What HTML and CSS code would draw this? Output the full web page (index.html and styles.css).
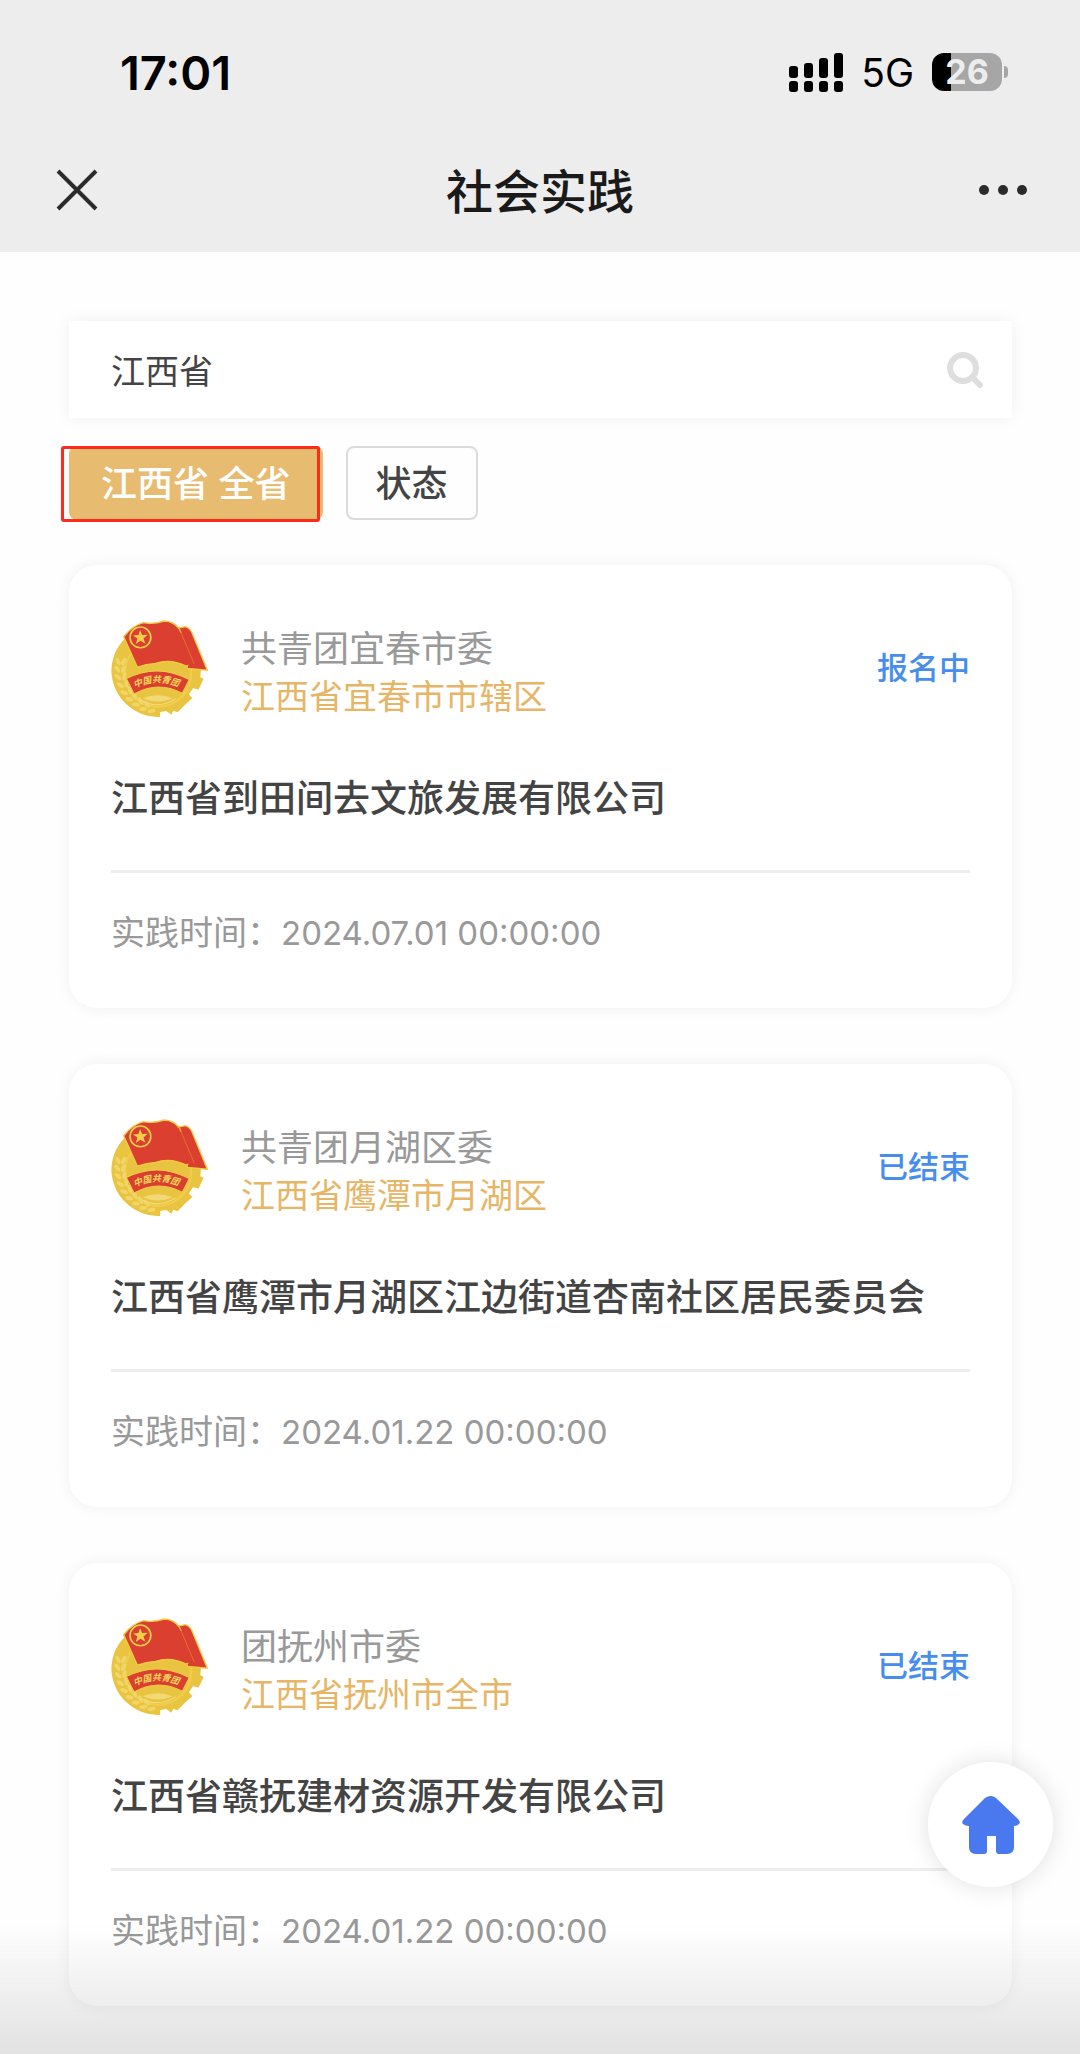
FILE: index.html
```html
<!DOCTYPE html>
<html lang="zh-CN">
<head>
<meta charset="utf-8">
<meta name="viewport" content="width=device-width, initial-scale=1">
<title>社会实践</title>
<link rel="stylesheet" href="styles.css">
</head>
<body>
<svg class="sprite" aria-hidden="true">
  <defs>
    <path id="banner-arc" d="M134 266 Q202 232 282 268"/>
    <symbol id="emblem" viewBox="63 62 290 290">
      <path fill="#e9c440" d="M64 214 A142 142 0 0 1 118 106 L300 110 L332 208 L330 233 L340 238 L325 270 L308 266 L296 284 L306 296 L288 312 L262 338 L249 333 L244 345 L228 334 L210 337 L210 352 A142 142 0 0 1 64 214Z"/>
      <circle cx="203" cy="222" r="103" fill="#f0ce4c"/>
      <circle cx="203" cy="222" r="96" fill="#e9c440"/>
      <g fill="#f1d568">
        <ellipse cx="84" cy="186" rx="6" ry="12" transform="rotate(-25 84 186)"/><ellipse cx="101" cy="186" rx="6" ry="12" transform="rotate(28 101 186)"/>
        <ellipse cx="82" cy="209" rx="6" ry="12" transform="rotate(-35 82 209)"/><ellipse cx="100" cy="209" rx="6" ry="12" transform="rotate(20 100 209)"/>
        <ellipse cx="84" cy="233" rx="6" ry="12" transform="rotate(-45 84 233)"/><ellipse cx="103" cy="230" rx="6" ry="12" transform="rotate(10 103 230)"/>
        <ellipse cx="91" cy="257" rx="6" ry="12" transform="rotate(-55 91 257)"/><ellipse cx="109" cy="251" rx="6" ry="12" transform="rotate(0 109 251)"/>
        <ellipse cx="102" cy="279" rx="6" ry="12" transform="rotate(-65 102 279)"/><ellipse cx="120" cy="271" rx="6" ry="12" transform="rotate(-10 120 271)"/>
        <ellipse cx="118" cy="299" rx="6" ry="12" transform="rotate(-75 118 299)"/><ellipse cx="134" cy="289" rx="6" ry="12" transform="rotate(-20 134 289)"/>
        <ellipse cx="137" cy="315" rx="6" ry="12" transform="rotate(-85 137 315)"/><ellipse cx="151" cy="304" rx="6" ry="12" transform="rotate(-30 151 304)"/>
        <ellipse cx="159" cy="328" rx="6" ry="12" transform="rotate(-95 159 328)"/><ellipse cx="170" cy="314" rx="6" ry="12" transform="rotate(-40 170 314)"/>
        <ellipse cx="184" cy="334" rx="6" ry="12" transform="rotate(-100 184 334)"/>
      </g>
      <path fill="#f3d976" d="M158 296 Q202 278 247 296 Q204 316 158 296Z"/>
      <path fill="none" stroke="#f3dc80" stroke-width="3" d="M150 300 Q202 332 256 298"/>
      <path fill="#da3f2f" stroke="#f2cb45" stroke-width="4" d="M256 82 Q270 88 283 82 Q296 84 304 98 L351 212 L292 207Z"/>
      <path fill="#da3f2f" stroke="#f2cb45" stroke-width="4" d="M101 112 Q128 78 160 70 Q190 76 222 65 Q252 66 268 90 L312 196 Q300 192 288 200 Q240 176 196 192 Q168 194 142 203Z"/>
      <path fill="#da3f2f" d="M268 100 L300 98 L342 205 L296 203Z"/>
      <path fill="none" stroke="#ee8338" stroke-width="2" d="M268 90 L312 194"/>
      <circle cx="151" cy="114" r="31" fill="none" stroke="#f4cd4c" stroke-width="5"/>
      <path fill="#f4cd4c" d="M150 92 L156 107 L173 106 L160 117 L166 133 L151 124 L137 134 L142 117 L129 108 L145 107Z"/>
      <path fill="#da3f2f" stroke="#f2cb45" stroke-width="3" d="M109 237 Q202 190 297 240 L276 281 Q204 242 132 283Z"/>
      <text class="emblem-text"><textPath href="#banner-arc">中国共青团</textPath></text>
    </symbol>
  </defs>
</svg>

<header class="top">
  <div class="status-bar">
    <time class="clock">17:01</time>
    <div class="indicators">
      <svg class="signal" viewBox="0 0 54 39" aria-label="信号">
        <rect x="0" y="13" width="9" height="12" rx="3"/><rect x="15" y="10" width="9" height="15" rx="3"/><rect x="30" y="5" width="9" height="20" rx="3"/><rect x="45" y="0" width="9" height="25" rx="3"/>
        <rect x="0" y="28" width="9" height="11" rx="3"/><rect x="15" y="28" width="9" height="11" rx="3"/><rect x="30" y="28" width="9" height="11" rx="3"/><rect x="45" y="28" width="9" height="11" rx="3"/>
      </svg>
      <span class="network">5G</span>
      <div class="battery"><span class="battery-level">26</span></div>
    </div>
  </div>
  <nav class="nav-bar">
    <button class="nav-button" type="button" aria-label="关闭">
      <svg class="icon-close" viewBox="0 0 42 42"><path d="M2 2L40 40M40 2L2 40"/></svg>
    </button>
    <h1 class="page-title">社会实践</h1>
    <button class="nav-button" type="button" aria-label="更多">
      <svg class="icon-more" viewBox="0 0 50 12"><circle cx="6" cy="6" r="5"/><circle cx="25" cy="6" r="5"/><circle cx="44" cy="6" r="5"/></svg>
    </button>
  </nav>
</header>

<main class="content">
  <form class="search" role="search">
    <input class="search-input" type="text" value="江西省" aria-label="搜索">
    <button class="search-button" type="button" aria-label="搜索">
      <svg class="icon-search" viewBox="0 0 38 38"><circle cx="17" cy="17" r="13"/><path d="M27 27L34 34"/></svg>
    </button>
  </form>

  <div class="filters">
    <button class="chip chip-active" type="button">江西省 全省</button>
    <button class="chip" type="button">状态</button>
  </div>

  <div class="cards">
    <article class="card">
      <div class="card-head">
        <svg class="emblem" aria-hidden="true"><use href="#emblem"/></svg>
        <div class="owner"><p class="org">共青团宜春市委</p><p class="region">江西省宜春市市辖区</p></div>
        <span class="state">报名中</span>
      </div>
      <h2 class="card-title">江西省到田间去文旅发展有限公司</h2>
      <p class="card-time">实践时间：<span class="date">2024.07.01 00:00:00</span></p>
    </article>
    <article class="card">
      <div class="card-head">
        <svg class="emblem" aria-hidden="true"><use href="#emblem"/></svg>
        <div class="owner"><p class="org">共青团月湖区委</p><p class="region">江西省鹰潭市月湖区</p></div>
        <span class="state">已结束</span>
      </div>
      <h2 class="card-title">江西省鹰潭市月湖区江边街道杏南社区居民委员会</h2>
      <p class="card-time">实践时间：<span class="date">2024.01.22 00:00:00</span></p>
    </article>
    <article class="card">
      <div class="card-head">
        <svg class="emblem" aria-hidden="true"><use href="#emblem"/></svg>
        <div class="owner"><p class="org">团抚州市委</p><p class="region">江西省抚州市全市</p></div>
        <span class="state">已结束</span>
      </div>
      <h2 class="card-title">江西省赣抚建材资源开发有限公司</h2>
      <p class="card-time">实践时间：<span class="date">2024.01.22 00:00:00</span></p>
    </article>
  </div>
</main>

<div class="bottom-shade"></div>
<a class="home" href="#" aria-label="首页">
  <svg class="icon-home" viewBox="0 0 58 58"><path d="M23 2Q29 -2 34 2L56 23Q59 26 57 28Q55 30 52 30V51Q52 58 45 58H37Q34 58 34 55V40H25V55Q25 58 22 58H14Q7 58 7 51V30Q3 30 1 28Q-1 26 2 23Z"/></svg>
</a>
</body>
</html>
```

FILE: styles.css
```css
* {
  box-sizing: border-box;
}

body {
  margin: 0;
  background: #fefefe;
  color: #444;
  font-family: Inter, "Noto Sans CJK SC", sans-serif;
}

h1, h2, p {
  margin: 0;
}

button {
  border: 0;
  background: none;
  font-family: inherit;
}

.sprite {
  position: absolute;
  width: 0;
  height: 0;
}

.emblem-text {
  fill: #f6d65a;
  font-size: 27px;
  font-style: italic;
  font-weight: 700;
}

/* Header */
.top {
  background: #ededed;
}

.status-bar {
  display: flex;
  align-items: center;
  justify-content: space-between;
  height: 128px;
  padding: 16px 78px 0 120px;
  color: #000;
}

.clock {
  font-size: 47px;
  font-weight: 600;
}

.indicators {
  display: flex;
  align-items: center;
}

.signal {
  width: 54px;
  height: 39px;
}

.network {
  margin: 0 18px;
  font-size: 39px;
}

.battery {
  position: relative;
  width: 70px;
  height: 38px;
  border-radius: 12px;
  background: linear-gradient(90deg, #000 19px, #a6a6a6 19px);
  color: #ededed;
  font-size: 34px;
  font-weight: 700;
  line-height: 38px;
  text-align: center;
}

.battery::after {
  content: "";
  position: absolute;
  top: 13px;
  right: -6px;
  width: 4px;
  height: 12px;
  border-radius: 0 4px 4px 0;
  background: #a6a6a6;
}

.nav-bar {
  display: flex;
  align-items: center;
  justify-content: space-between;
  height: 124px;
  padding: 0 52px;
}

.nav-button {
  display: flex;
  align-items: center;
  justify-content: center;
  width: 50px;
  height: 50px;
  padding: 0;
}

.icon-close {
  width: 42px;
  height: 42px;
  fill: none;
  stroke: #2b2b2b;
  stroke-width: 4;
}

.icon-more {
  width: 50px;
  height: 12px;
  fill: #2b2b2b;
}

.page-title {
  padding-bottom: 4px;
  color: #1a1a1a;
  font-size: 47px;
  font-weight: 500;
}

/* Search and filters */
.content {
  padding: 69px 68px 47px 69px;
}

.search {
  display: flex;
  align-items: center;
  height: 97px;
  padding: 0 28px 0 42px;
  background: #fff;
  box-shadow: 0 0 16px rgba(0, 0, 0, 0.06);
}

.search-input {
  flex: 1;
  min-width: 0;
  padding: 0;
  border: 0;
  outline: 0;
  background: none;
  color: #444;
  font: 34px Inter, "Noto Sans CJK SC", sans-serif;
}

.search-button {
  display: flex;
  padding: 0;
}

.icon-search {
  width: 38px;
  height: 38px;
  fill: none;
  stroke: #dedede;
  stroke-width: 6;
  stroke-linecap: round;
}

.filters {
  display: flex;
  gap: 23px;
  margin: 28px 0 45px;
}

.chip {
  position: relative;
  height: 74px;
  padding: 2px 28px 0;
  border: 2px solid #dcdcdc;
  border-radius: 8px;
  color: #444;
  font-size: 36px;
  font-weight: 500;
  line-height: 68px;
}

.chip-active {
  padding: 2px 30px 0;
  border-color: #e8bc70;
  background: #e8bc70;
  color: #fff;
}

.chip-active::after {
  content: "";
  position: absolute;
  inset: -2px 1px -4px -10px;
  border: 3px solid #ff2a1a;
  border-radius: 3px;
}

/* Cards */
.cards {
  display: flex;
  flex-direction: column;
  gap: 56px;
}

.card {
  padding: 55px 42px 51px;
  border-radius: 28px;
  background: #fff;
  box-shadow: 0 0 16px rgba(0, 0, 0, 0.06);
}

.card-head {
  display: flex;
  align-items: center;
  height: 97px;
}

.emblem {
  flex: none;
  width: 97px;
  height: 97px;
}

.owner {
  flex: 1;
  padding-top: 8px;
  margin-left: 33px;
}

.org {
  color: #999;
  font-size: 36px;
  line-height: 48px;
}

.region {
  color: #e6b566;
  font-size: 34px;
  line-height: 48px;
}

.state {
  padding-bottom: 6px;
  color: #478eec;
  font-size: 31px;
  font-weight: 500;
}

.card-title {
  margin: 54px 0 43px;
  font-size: 37px;
  font-weight: 500;
  line-height: 56px;
}

.card-time {
  padding-top: 36px;
  border-top: 3px solid #eee;
  color: #999;
  font-size: 34px;
  line-height: 48px;
}

.date {
  font-size: 33px;
}

/* Overlays */
.bottom-shade {
  position: fixed;
  right: 0;
  bottom: 0;
  left: 0;
  height: 130px;
  background: linear-gradient(rgba(0, 0, 0, 0), rgba(0, 0, 0, 0.11));
  pointer-events: none;
}

.home {
  position: fixed;
  right: 27px;
  bottom: 167px;
  display: flex;
  align-items: center;
  justify-content: center;
  width: 125px;
  height: 125px;
  border-radius: 50%;
  background: #fff;
  box-shadow: 0 0 24px rgba(0, 0, 0, 0.12);
}

.icon-home {
  width: 58px;
  height: 58px;
  fill: #4a78ee;
}
```
